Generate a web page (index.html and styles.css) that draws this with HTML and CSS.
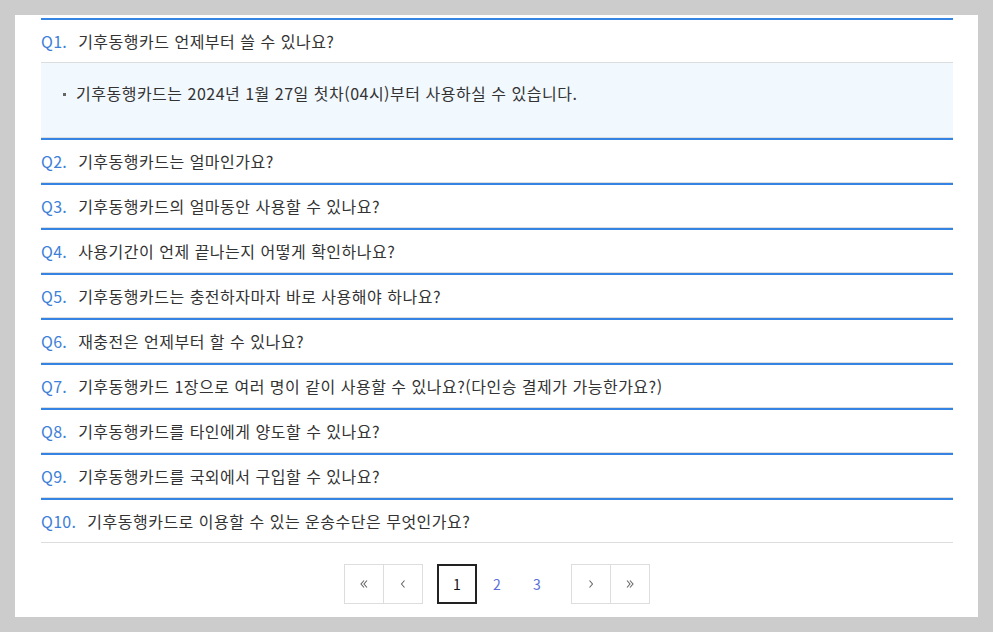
FILE: index.html
```html
<!DOCTYPE html>
<html lang="ko">
<head>
<meta charset="utf-8">
<link rel="stylesheet" href="styles.css">
</head>
<body>
<div class="panel">
  <ul class="faq">
    <li class="item open">
      <div class="q"><span class="qn">Q1.</span><span class="qt">기후동행카드 언제부터 쓸 수 있나요?</span></div>
      <div class="a"><p class="bullet">기후동행카드는 2024년 1월 27일 첫차(04시)부터 사용하실 수 있습니다.</p></div>
    </li>
    <li class="item"><div class="q"><span class="qn">Q2.</span><span class="qt">기후동행카드는 얼마인가요?</span></div></li>
    <li class="item"><div class="q"><span class="qn">Q3.</span><span class="qt">기후동행카드의 얼마동안 사용할 수 있나요?</span></div></li>
    <li class="item"><div class="q"><span class="qn">Q4.</span><span class="qt">사용기간이 언제 끝나는지 어떻게 확인하나요?</span></div></li>
    <li class="item"><div class="q"><span class="qn">Q5.</span><span class="qt">기후동행카드는 충전하자마자 바로 사용해야 하나요?</span></div></li>
    <li class="item"><div class="q"><span class="qn">Q6.</span><span class="qt">재충전은 언제부터 할 수 있나요?</span></div></li>
    <li class="item"><div class="q"><span class="qn">Q7.</span><span class="qt">기후동행카드 1장으로 여러 명이 같이 사용할 수 있나요?(다인승 결제가 가능한가요?)</span></div></li>
    <li class="item"><div class="q"><span class="qn">Q8.</span><span class="qt">기후동행카드를 타인에게 양도할 수 있나요?</span></div></li>
    <li class="item"><div class="q"><span class="qn">Q9.</span><span class="qt">기후동행카드를 국외에서 구입할 수 있나요?</span></div></li>
    <li class="item"><div class="q"><span class="qn">Q10.</span><span class="qt">기후동행카드로 이용할 수 있는 운송수단은 무엇인가요?</span></div></li>
  </ul>
  <nav class="pager">
    <div class="group">
      <a class="btn" href="#"><svg width="10" height="10" viewBox="0 0 10 10"><path d="M5 1.5L2 5L5 8.5M8 1.5L5 5L8 8.5" fill="none" stroke="#666" stroke-width="1.1"/></svg></a>
      <a class="btn" href="#"><svg width="10" height="10" viewBox="0 0 10 10"><path d="M6.5 1.5L3.5 5L6.5 8.5" fill="none" stroke="#666" stroke-width="1.1"/></svg></a>
    </div>
    <div class="pages">
      <a class="num active" href="#">1</a>
      <a class="num" href="#">2</a>
      <a class="num" href="#">3</a>
    </div>
    <div class="group">
      <a class="btn" href="#"><svg width="10" height="10" viewBox="0 0 10 10"><path d="M3.5 1.5L6.5 5L3.5 8.5" fill="none" stroke="#666" stroke-width="1.1"/></svg></a>
      <a class="btn" href="#"><svg width="10" height="10" viewBox="0 0 10 10"><path d="M2 1.5L5 5L2 8.5M5 1.5L8 5L5 8.5" fill="none" stroke="#666" stroke-width="1.1"/></svg></a>
    </div>
  </nav>
</div>
</body>
</html>
```

FILE: styles.css
```css
html, body {
  margin: 0;
  padding: 0;
  background: #cccccc;
}
body {
  padding: 15px;
  font-family: "Noto Sans CJK KR", "Noto Sans", sans-serif;
}
.panel {
  background: #ffffff;
  padding: 3px 25px 13px 26px;
  height: 602px;
  box-sizing: border-box;
}
.faq {
  list-style: none;
  margin: 0;
  padding: 0;
}
.item {
  border-top: 2px solid #3584e4;
  border-bottom: 1px solid #dddddd;
}
.q {
  height: 42px;
  display: flex;
  align-items: center;
  font-size: 16px;
  letter-spacing: 0.5px;
}
.qn {
  color: #3d80d8;
  font-size: 16px;
  letter-spacing: 0.3px;
  margin-right: 11px;
}
.qt {
  color: #333333;
}
.a {
  border-top: 1px solid #dddddd;
  background: #f1f8fe;
  height: 75px;
  box-sizing: border-box;
  padding: 19px 22px 0 22px;
}
.bullet {
  margin: 0;
  font-size: 16px;
  letter-spacing: 0.5px;
  color: #333333;
  display: flex;
  align-items: center;
  line-height: 22px;
}
.bullet::before {
  content: "";
  width: 3px;
  height: 3px;
  background: #666666;
  margin-right: 10px;
  margin-top: 2px;
}
.pager {
  margin-top: 21px;
  display: flex;
  justify-content: center;
  gap: 14px;
}
.group {
  display: flex;
}
.btn {
  width: 40px;
  height: 40px;
  box-sizing: border-box;
  border: 1px solid #dddddd;
  display: flex;
  align-items: center;
  justify-content: center;
}
.btn + .btn {
  border-left: none;
  width: 39px;
}
.pages {
  display: flex;
}
.num {
  width: 40px;
  height: 40px;
  box-sizing: border-box;
  display: flex;
  align-items: center;
  justify-content: center;
  font-size: 14px;
  color: #5b6fd8;
  text-decoration: none;
}
.num.active {
  border: 2px solid #222222;
  color: #111111;
}
```
